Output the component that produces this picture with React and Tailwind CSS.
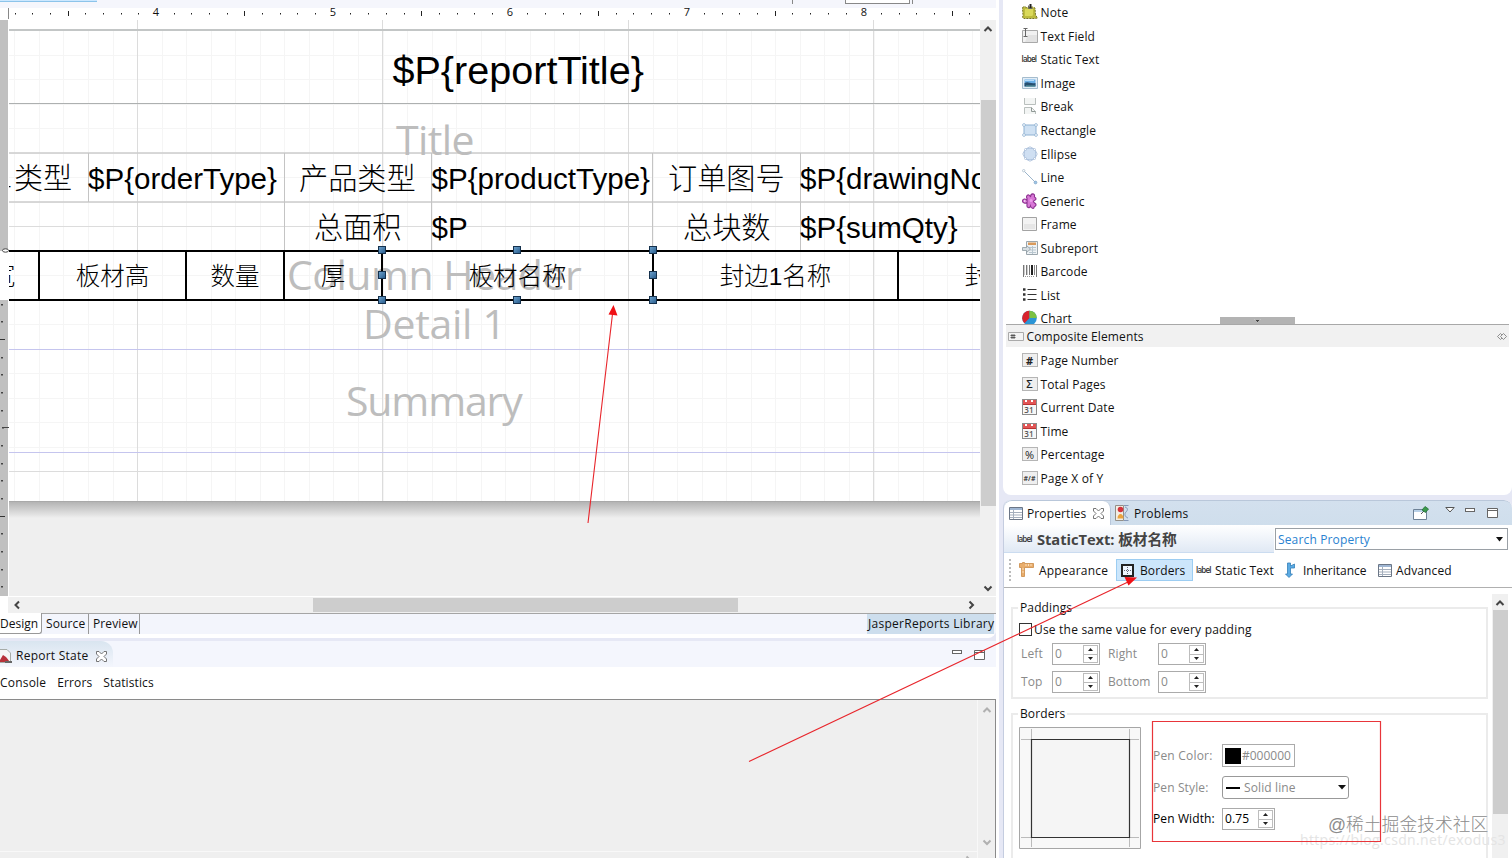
const range = (n) => Array.from({ length: n }, (_, i) => i);

const Svg = ({ w = 16, h = 16, className = "", children }) => (
  <svg width={w} height={h} viewBox={`0 0 ${w} ${h}`} className={`block shrink-0 ${className}`} fill="none">
    {children}
  </svg>
);

/* ---------- icons ---------- */

const NoteIcon = () => (
  <Svg>
    <path d="M.5 3.500l2-1 2 1 6-.5 2.500 1 .5 7 2 3-3 .5H2l-1.500-1 .5-2z" fill="#bcbb3d" stroke="#77752a" strokeDasharray="2 1" />
    <path d="M3 5h8v6l-1 1H3z" fill="#dad95a" />
    <path d="M8.500 0v5" stroke="#222" strokeWidth="2" />
    <path d="M6.500 1.500v3h4" stroke="#666" />
  </Svg>
);

const TextFieldIcon = () => (
  <Svg>
    <path d="M.5 2.500h15v12H.5z" fill="#f1f1f1" stroke="#a9a9a9" />
    <path d="M6 7h9v7H3z" fill="#e2e2e2" />
    <path d="M1.500 .5h4M3.500 .5v8M1.500 8.500h4" stroke="#666" />
  </Svg>
);

const LabelIcon = () => (
  <span className="block w-4 shrink-0 text-[8px] leading-[16px] font-semibold tracking-[-0.8px] text-[#333]">label</span>
);

const ImageIcon = () => (
  <Svg>
    <path d="M.5 2.500h15v11H.5z" fill="#e3eef7" stroke="#a5bccd" />
    <path d="M2.500 4.500h11v7h-11z" fill="#69aee6" />
    <path d="M2.500 8c4-2 5 1 11 0v3.500h-11z" fill="#274f70" />
    <path d="M4 11h9" stroke="#5fa0a0" />
    <path d="M3 5.500h9" stroke="#b8ddfa" />
  </Svg>
);

const BreakIcon = () => (
  <Svg>
    <path d="M2.500 0v6.500h11V0M2.500 16V9.500h7l4 4V16" stroke="#b9bfbd" fill="#f3f5f4" />
    <path d="M9.500 9.500v4h4" stroke="#8f9895" />
  </Svg>
);

const RectangleIcon = () => (
  <Svg>
    <path d="M2 3h12v10H2z" fill="#cfe1f3" stroke="#8eb1d2" />
    {[[2, 3], [14, 3], [2, 13], [14, 13]].map(([x, y]) => (
      <circle key={`${x}-${y}`} cx={x} cy={y} r="1.4" fill="#fff" stroke="#8eb1d2" strokeWidth=".8" />
    ))}
  </Svg>
);

const EllipseIcon = () => (
  <Svg>
    <circle cx="8" cy="8" r="6.3" fill="#cfdff2" stroke="#93add0" />
    {[[8, 1.7], [14.3, 8], [8, 14.3], [1.7, 8], [3.5, 3.5], [12.5, 3.5], [3.5, 12.5], [12.5, 12.5]].map(([x, y]) => (
      <circle key={`${x}-${y}`} cx={x} cy={y} r="1" fill="#fff" stroke="#a5bbd8" strokeWidth=".7" />
    ))}
  </Svg>
);

const LineIcon = () => (
  <Svg>
    <path d="M2 2l11 11" stroke="#9bb4ca" />
    <circle cx="1.7" cy="1.7" r="1.2" fill="#fff" stroke="#a9bccb" strokeWidth=".8" />
    <circle cx="13.5" cy="13.5" r="1.4" fill="#9cc5e8" stroke="#86a8c8" strokeWidth=".8" />
  </Svg>
);

const GenericIcon = () => (
  <Svg>
    <path
      d="M5 5.500c-1.500-3 1.500-5 3-2.500l.5 1C8.500 0 13 0 12.500 3c-.5 2 1.500 1 1.500 3 0 1.500-2.500 1-2.500 2.500s3 1.500 2.500 3.500-2 1-2 2.500-3 1-3.500-1.500c-1 3-4 1.500-3.500-1V9.500C3.500 11 .5 10 .5 8s3-3 4.500-.5z"
      fill="#d877d6"
      stroke="#8c3290"
      strokeWidth="1.1"
    />
    <circle cx="2.700" cy="8" r=".8" fill="#fff" />
    <circle cx="9" cy="7.500" r="1.500" fill="#ee9fec" />
  </Svg>
);

const FrameIcon = () => (
  <Svg>
    <path d="M.5 1.500h14v13H.5z" fill="#f3f3f3" stroke="#a3a3a3" />
    <path d="M2 8h11v5H2z" fill="#e6e6e6" />
  </Svg>
);

const SubreportIcon = () => (
  <Svg>
    <path d="M4.500 1.500h11v13h-11z" fill="#eef2f5" stroke="#9ba6ad" />
    <path d="M6 2.500h8v2.500H6z" fill="#d99a5c" />
    <path d="M7 7.500h7M7 10h7M7 12.500h7M10.500 6v8" stroke="#b8c6cf" />
    <path d="M.5 7.500h4v-2l4 3.500-4 3.500v-2h-4z" fill="#d7dee2" stroke="#8d9aa2" strokeWidth=".8" />
  </Svg>
);

const BarcodeIcon = () => (
  <Svg>
    <path d="M1.500 2v12M4.500 2v10M7.500 2v10M14.500 2v12" stroke="#777" />
    <path d="M10 2v10" stroke="#222" strokeWidth="2" />
    <path d="M12.500 2v10" stroke="#888" />
    <path d="M2.500 2v10M5.500 2v10" stroke="#ccc" />
    <path d="M3 13.500h10" stroke="#999" strokeDasharray="1 1" />
  </Svg>
);

const ListIcon = () => (
  <Svg>
    <path d="M5.500 2.500h9M5.500 7.500h9M5.500 12.500h9" stroke="#333" strokeWidth="1.2" />
    <path d="M1 2.500h2.500M1 7.500h2.500M1 12.500h2.500" stroke="#333" strokeWidth="2.500" />
  </Svg>
);

const ChartIcon = () => (
  <Svg>
    <circle cx="7.500" cy="8" r="7.3" fill="#2b95d6" />
    <path d="M7.500 8V.7a7.300 7.300 0 0 0-5 12.500z" fill="#d8232d" />
    <path d="M7.500 8V.7A7.300 7.300 0 0 1 14.800 8z" fill="#7cc143" />
  </Svg>
);

const GlyphIcon = ({ glyph, className }) => (
  <span className={`flex h-[14px] w-4 shrink-0 items-center justify-center border border-[#b5b5b5] bg-[#efefef] leading-none text-[#222] ${className}`}>
    {glyph}
  </span>
);

const CalendarIcon = () => (
  <span className="flex h-4 w-[15px] shrink-0 flex-col border border-[#8c8c8c] bg-[#f7f7f7]">
    <span className="flex h-[5px] justify-around border-b border-[#b33] bg-[#e25555]">
      <span className="size-[2px] bg-white" />
      <span className="size-[2px] bg-white" />
    </span>
    <span className="text-center text-[8px] leading-[9px] font-semibold text-[#555]">31</span>
  </span>
);

const CloseX = () => (
  <Svg w={11} h={11}>
    <path
      d="M.5.5h2.500L5.500 3 8 .5h2.500V3L8 5.500 10.500 8v2.500H8L5.500 8 3 10.500H.5V8L3 5.500.5 3z"
      fill="#fff"
      stroke="#666"
      strokeWidth=".9"
    />
  </Svg>
);

const Minimize = () => <span className="block h-[4px] w-[10px] border border-[#666] bg-white" />;

const Maximize = () => (
  <Svg w={11} h={10}>
    <path d="M.5.5h10v9H.5zM.5 2.500h10" fill="#fff" stroke="#666" />
  </Svg>
);

const Chevron = ({ dir, className = "text-[#444]" }) => {
  const d = {
    up: "M1.500 7L5 3.500 8.500 7",
    down: "M1.500 3.500L5 7l3.500-3.500",
    left: "M7 1.500L3.500 5 7 8.500",
    right: "M3.500 1.500L7 5 3.500 8.500",
  }[dir];
  return (
    <Svg w={10} h={10} className={className}>
      <path d={d} stroke="currentColor" strokeWidth="2" />
    </Svg>
  );
};

/* ---------- report canvas ---------- */

const Rulers = () => (
  <Svg w={972} h={13}>
    <path d="M.5 0v11" stroke="#888" />
    {range(55).map((i) => {
      const step = i - 8;
      const x = Math.round(148 + step * 17.68);
      if (step % 10 === 0) return null;
      return step % 5 === 0 ? (
        <rect key={i} x={x} y="3" width="1" height="5" fill="#222" />
      ) : (
        <rect key={i} x={x} y="5" width="1" height="1.500" fill="#222" />
      );
    })}
  </Svg>
);

const rulerNumbers = [
  ["4", "left-[143px]"],
  ["5", "left-[320px]"],
  ["6", "left-[497px]"],
  ["7", "left-[674px]"],
  ["8", "left-[851px]"],
];

// coordinates below are relative to the page area, which starts at (9, 20)
const Grid = () => (
  <Svg w={971} h={576}>
    <rect width="971" height="482" fill="#fff" />
    {range(40).map((i) => (
      <path key={i} d={`M${Math.round(5.3 + i * 24.55)}.5 10V482`} stroke="#f5f5f5" />
    ))}
    {range(19).map((i) => (
      <path key={i} d={`M0 ${Math.round(10 + i * 24.5)}.5H971`} stroke="#f5f5f5" />
    ))}
    <path d="M128.500 0V482M373.500 0V482M619.500 0V482M864.500 0V482" stroke="#dcdcdc" />
    <path d="M0 206.500H971M0 451.500H971" stroke="#dcdcdc" />
    <path d="M0 10H971" stroke="#c3c6c6" strokeWidth="2" />
    <path d="M0 83.500H971" stroke="#adb0b0" />
    <path d="M0 133H971M0 182H971" stroke="#cccccc" strokeWidth="1.500" />
    <path d="M79.500 133V182M275.500 133V231M422.500 133V231M643.500 133V231M791.500 133V231" stroke="#c4c4c4" />
    <path d="M0 329.500H971M0 432.500H971" stroke="#c5c5ee" />
    <path d="M0 481.500H971" stroke="#a9a9a9" />
  </Svg>
);

const cellText = [
  ["$P{reportTitle}", "left-[383.500px] top-[26px] text-[39.550px] leading-[48px]"],
  ["$P{orderType}", "left-[79px] top-[141px] text-[29.550px] leading-[36px]"],
  ["$P{productType}", "left-[422.500px] top-[141px] text-[29.550px] leading-[36px]"],
  ["$P{drawingNo}", "left-[791px] top-[141px] text-[29.550px] leading-[36px]"],
  ["$P", "left-[422.500px] top-[190px] text-[29.550px] leading-[36px]"],
  ["$P{sumQty}", "left-[791px] top-[190px] text-[29.550px] leading-[36px]"],
  ["单", "left-[-26px] top-[143px] text-[29px] leading-[36px] font-light"],
  ["类型", "left-[5px] top-[141px] text-[29px] leading-[36px] font-light"],
  ["产品类型", "left-[290px] top-[141px] text-[29.200px] leading-[36px] font-light"],
  ["订单图号", "left-[659px] top-[141px] text-[29.200px] leading-[36px] font-light"],
  ["总面积", "left-[305px] top-[190px] text-[29.200px] leading-[36px] font-light"],
  ["总块数", "left-[674px] top-[190px] text-[29.200px] leading-[36px] font-light"],
];

const bandText = [
  ["Title", "left-[387px] top-[91px] tracking-[-0.600px]"],
  ["Column Header", "left-[278px] top-[226px] tracking-[-0.500px]"],
  ["Detail 1", "left-[354px] top-[275px] tracking-[-0.300px]"],
  ["Summary", "left-[337px] top-[352px] tracking-[-1.150px]"],
];

const headerCells = [
  ["板材宽", "left-[-92px] w-[123px]"],
  ["板材高", "left-[29px] w-[149px]"],
  ["数量", "left-[176px] w-[100px]"],
  ["厚", "left-[274px] w-[100px]"],
  ["板材名称", "left-[372px] w-[273px]"],
  ["封边1名称", "left-[643px] w-[247px]"],
  ["封边2名称", "left-[888px] w-[247px]"],
];

const handles = [
  "left-[369px] top-[226px]",
  "left-[504px] top-[226px]",
  "left-[640px] top-[226px]",
  "left-[369px] top-[251px]",
  "left-[640px] top-[251px]",
  "left-[369px] top-[276px]",
  "left-[504px] top-[276px]",
  "left-[640px] top-[276px]",
];

const Page = () => (
  <div className="relative h-[576px] w-[971px] overflow-hidden bg-[#efefef] tracking-normal text-black">
    <Grid />
    <div className="absolute top-[482px] left-0 h-[16px] w-full bg-linear-to-b from-[#b4b4b4] to-[#efefef]" />
    {bandText.map(([text, pos]) => (
      <span key={text} className={`absolute font-['Open_Sans'] text-[41px] leading-[56px] whitespace-nowrap text-[#bdbdbd] ${pos}`}>
        {text}
      </span>
    ))}
    {headerCells.map(([text, pos]) => (
      <div
        key={text}
        className={`absolute top-[230px] flex h-[51px] items-center justify-center border-2 border-black pt-[3px] font-['Liberation_Sans','Noto_Sans_CJK_SC',sans-serif] text-[24.500px] font-light ${pos}`}
      >
        {text}
      </div>
    ))}
    {cellText.map(([text, pos]) => (
      <span key={text} className={`absolute font-['Liberation_Sans','Noto_Sans_CJK_SC',sans-serif] whitespace-nowrap ${pos}`}>
        {text}
      </span>
    ))}
    {handles.map((pos) => (
      <span key={pos} className={`absolute size-[8px] border border-[#15314d] bg-linear-to-br from-[#6ba0cb] to-[#2b5f8f] ${pos}`} />
    ))}
  </div>
);

const SideRuler = () => (
  <div className="relative h-[576px] w-[9px] shrink-0 bg-white">
    <Svg w={9} h={576}>
      <rect width="8" height="231" fill="#c0c0c0" />
      <rect y="280" width="8" height="296" fill="#c0c0c0" />
      {range(17).map((i) => {
        const y = Math.round(283.5 + i * 17.68);
        if (i === 7) return null;
        return i % 5 === 2 ? (
          <rect key={i} y={y} width="5" height="1" fill="#333" />
        ) : (
          <rect key={i} x="1" y={y} width="2" height="1.500" fill="#444" />
        );
      })}
      <path d="M2 407.500h7M3 407v2" stroke="#444" />
      <ellipse cx="5.500" cy="230.500" rx="3" ry="1.700" fill="#fff" stroke="#444" />
    </Svg>
  </div>
);

const DesignEditor = () => (
  <div className="flex h-[638px] flex-col overflow-hidden rounded-br-lg bg-white">
    <div className="flex h-[8px] shrink-0 items-start bg-[#f5f6fc]">
      <div className="h-[2px] w-[97px] border-b border-[#8cc4ea] bg-[#cce8ff]" />
      <div className="ml-[695px] h-[4px] w-px bg-[#888]" />
      <div className="ml-[52px] h-[4px] w-[65px] border border-t-0 border-[#888] bg-white" />
      <div className="ml-[2px] h-[4px] w-px bg-[#888]" />
    </div>
    <div className="relative h-[12px] shrink-0 pl-[8px]">
      <Rulers />
      {rulerNumbers.map(([n, pos]) => (
        <span key={n} className={`absolute -top-[2px] w-[26px] text-center font-['Open_Sans'] text-[11px] leading-[12px] text-[#111] ${pos}`}>
          {n}
        </span>
      ))}
    </div>
    <div className="flex h-[576px] shrink-0">
      <SideRuler />
      <Page />
      <div className="flex w-[16px] flex-col items-center bg-[#f0f0f0]">
        <Chevron dir="up" className="mt-[4px] text-[#444]" />
        <div className="mt-[66px] h-[406px] w-[15px] bg-[#cdcdcd]" />
        <Chevron dir="down" className="mt-[77px] text-[#444]" />
      </div>
    </div>
    <div className="flex h-[17px] shrink-0 items-center pt-px">
      <div className="w-[8px]" />
      <div className="flex h-[16px] w-[988px] items-center bg-[#f0f0f0]">
        <Chevron dir="left" className="ml-[4px] text-[#444]" />
        <div className="ml-[291px] h-[14px] w-[425px] bg-[#cdcdcd]" />
        <Chevron dir="right" className="ml-[228px] text-[#444]" />
      </div>
    </div>
    <div className="flex h-[21px] shrink-0 border-t border-[#a5a5a5] bg-[#f3f5fc]">
      <div className="-mt-px h-[21px] w-[42px] rounded-br-[3px] border-r border-b border-[#999] bg-white leading-[22px] tracking-normal">
        Design
      </div>
      <div className="w-[47px] border-r border-[#999] pl-[4px] leading-[20px]">Source</div>
      <div className="w-[51px] border-r border-[#999] pl-[4px] leading-[20px]">Preview</div>
      <div className="mr-[2px] ml-auto w-[127px] bg-[#cddeed] pl-px leading-[19px] tracking-[0.280px]">JasperReports Library</div>
    </div>
  </div>
);

const ReportState = () => (
  <div className="flex h-[217px] flex-col overflow-hidden bg-white">
    <div className="flex h-[26px] shrink-0 items-center bg-[#f4f6fd]">
      <div className="flex h-full w-[113px] items-center rounded-tr-xl bg-linear-to-b from-[#d9e5f0] to-[#f4f6fd] pt-[4px]">
        <Svg w={13} h={16}>
          <path d="M0 1.500h7l3.500 3.500v9.500H0" fill="#f5f7f5" stroke="#a6aca8" />
          <path d="M0 12l3-5 3 2 4 5H0z" fill="#b8323a" />
          <path d="M5 14h7" stroke="#666" strokeWidth="2" />
        </Svg>
        <span className="mr-[7px] ml-[3px] tracking-[0.250px]">Report State</span>
        <CloseX />
      </div>
      <div className="mr-[11px] ml-auto flex items-start gap-[12px] pt-[2px]">
        <Minimize />
        <Maximize />
      </div>
    </div>
    <div className="flex h-[32px] shrink-0 items-center gap-[11px]">
      <span className="tracking-[0.200px]">Console</span>
      <span>Errors</span>
      <span>Statistics</span>
    </div>
    <div className="flex min-h-0 grow border-t border-r border-[#8a8a8a] bg-[#efefef]">
      <div className="flex grow flex-col items-end justify-end border-r border-[#f8f8f8]">
        <div className="flex h-[7px] w-full justify-end overflow-hidden border-t border-[#f8f8f8] pr-[4px]">
          <Chevron dir="right" className="mt-[3px] text-[#b0b0b0]" />
        </div>
      </div>
      <div className="flex w-[17px] flex-col items-center justify-between pt-[5px] pb-[11px]">
        <Chevron dir="up" className="text-[#b0b0b0]" />
        <Chevron dir="down" className="text-[#b0b0b0]" />
      </div>
    </div>
  </div>
);

/* ---------- palette ---------- */

const basicElements = [
  ["Note", <NoteIcon />],
  ["Text Field", <TextFieldIcon />],
  ["Static Text", <LabelIcon />],
  ["Image", <ImageIcon />],
  ["Break", <BreakIcon />],
  ["Rectangle", <RectangleIcon />],
  ["Ellipse", <EllipseIcon />],
  ["Line", <LineIcon />],
  ["Generic", <GenericIcon />],
  ["Frame", <FrameIcon />],
  ["Subreport", <SubreportIcon />],
  ["Barcode", <BarcodeIcon />],
  ["List", <ListIcon />],
  ["Chart", <ChartIcon />],
];

const compositeElements = [
  ["Page Number", <GlyphIcon glyph="#" className="text-[11px] font-bold" />],
  ["Total Pages", <GlyphIcon glyph="Σ" className="text-[11px] font-semibold" />],
  ["Current Date", <CalendarIcon />],
  ["Time", <CalendarIcon />],
  ["Percentage", <GlyphIcon glyph="%" className="text-[11px]" />],
  ["Page X of Y", <GlyphIcon glyph="#/#" className="text-[7px] font-semibold" />],
];

const PaletteRow = ({ label, icon }) => (
  <div className="flex h-[23.550px] shrink-0 items-center pl-[18.500px]">
    <div className="flex w-[19px] shrink-0">{icon}</div>
    <span className="pt-[2px]">{label}</span>
  </div>
);

const Palette = () => (
  <div className="flex h-[495px] flex-col rounded-b-lg bg-white">
    <div className="relative flex h-[324px] shrink-0 flex-col overflow-hidden pt-[0.500px]">
      {basicElements.map(([label, icon]) => (
        <PaletteRow key={label} label={label} icon={icon} />
      ))}
      <div className="absolute bottom-0 left-[217px] flex h-[7px] w-[75px] items-center justify-center bg-[#b3b3b3]">
        <Svg w={7} h={4}>
          <path d="M.5 .5h6l-3 3z" fill="#444" stroke="#eee" strokeWidth=".5" />
        </Svg>
      </div>
    </div>
    <div className="mr-[3px] ml-[3px] flex h-[23px] shrink-0 items-center border-t border-[#a8a8a8] bg-[#f1f1f1] pr-[2px] pl-[2px]">
      <Svg w={16} h={9}>
        <path d="M.5.5h15v8H.5z" fill="#f4f4f4" stroke="#aaa" />
        <path d="M4 2v5M6 2v5M2.500 3.500h5M2.500 5.500h5" stroke="#444" strokeWidth=".8" />
      </Svg>
      <span className="ml-[2.500px] pt-[2px]">Composite Elements</span>
      <Svg w={10} h={7} className="ml-auto">
        <path d="M3.500.5L.5 3.500l3 3L5 5M3.500.5L5 2M6.500.5l3 3-3 3-3-3z" stroke="#777" strokeWidth=".8" />
      </Svg>
    </div>
    <div className="pt-[1.500px]">
      {compositeElements.map(([label, icon]) => (
        <PaletteRow key={label} label={label} icon={icon} />
      ))}
    </div>
  </div>
);

/* ---------- properties ---------- */

const TableIcon = () => (
  <Svg w={14} h={13}>
    <path d="M.5.5h13v12H.5z" fill="#fff" stroke="#6b7686" />
    <path d="M1 1h12v2H1z" fill="#9fb6d3" />
    <path d="M1 5.500h12M1 8h12M1 10.500h12M4.500 3v9" stroke="#a5afbd" />
  </Svg>
);

const SpinArrows = () => (
  <span className="my-px mr-px flex w-[15px] shrink-0 flex-col border border-[#bdbdbd]">
    <span className="flex flex-1 items-center justify-center border-b border-[#bdbdbd]">
      <Svg w={5} h={3}><path d="M0 3L2.500 0 5 3z" fill="#222" /></Svg>
    </span>
    <span className="flex flex-1 items-center justify-center">
      <Svg w={5} h={3}><path d="M0 0h5L2.500 3z" fill="#222" /></Svg>
    </span>
  </span>
);

const Spinner = ({ value, className }) => (
  <span className={`flex h-[22px] justify-between border border-[#ababab] bg-white pl-[2px] leading-[19px] ${className}`}>
    {value}
    <SpinArrows />
  </span>
);

const Group = ({ title, className, children }) => (
  <fieldset className={`mx-0 border-2 border-[#ebebeb] px-[6px] ${className}`}>
    <legend className="ml-[-1px] px-[2px] leading-[16px]">{title}</legend>
    {children}
  </fieldset>
);

const PropertyTabs = () => (
  <div className="flex h-[25px] shrink-0 rounded-t-lg border-t border-[#b9c7da] bg-linear-to-b from-[#d3e0ee] to-[#cfdeec]">
    <div className="flex w-[107px] items-center rounded-t-lg border-r border-[#b9c7da] bg-white pl-[5px]">
      <TableIcon />
      <span className="mr-[7px] ml-[4px] pt-[2px]">Properties</span>
      <CloseX />
    </div>
    <div className="flex items-center pl-[4px]">
      <Svg w={14} h={16}>
        <path d="M.5.5h8v15h-8z" fill="#f2eee4" stroke="#938f88" />
        <circle cx="5.500" cy="4.500" r="2.800" fill="#d4343c" />
        <path d="M2.500 13.500c0-6 6-6 6 0z" fill="#eba33e" />
        <path d="M9 .5h4.500M10 2c3 1 3 3 1 5s-1 5 2 6M13.500 15.500H9" stroke="#8397b7" />
      </Svg>
      <span className="ml-[5px] pt-[2px]">Problems</span>
    </div>
    <div className="mr-[14px] ml-auto flex items-start pt-[5px]">
      <Svg w={16} h={15}>
        <path d="M.5 3.500h13v10H.5z" fill="#fff" stroke="#6d8196" />
        <path d="M1 4h12v2H1z" fill="#b9d1e8" />
        <path d="M8 8l3-3" stroke="#555" />
        <path d="M9 4l3-3.500L15.500 3l-3 3.500z" fill="#3a9a4b" stroke="#23703a" strokeWidth=".8" />
      </Svg>
      <Svg w={10} h={6} className="mt-px ml-[16px]">
        <path d="M.8.5h8.400L5 5z" fill="#fff" stroke="#555" />
      </Svg>
      <span className="mt-[2px] ml-[10px]"><Minimize /></span>
      <span className="mt-[2px] ml-[12px]"><Maximize /></span>
    </div>
  </div>
);

const Toolbar = () => (
  <div className="flex h-[35px] shrink-0 items-center border-b border-[#b0b0b0] pl-[5px]">
    <span className="h-[22px] border-l-2 border-dotted border-[#bbb]" />
    <div className="ml-[8px] flex w-[97px] items-center">
      <Svg>
        <path d="M.5 1.500h3v-1h2v1h9v4h-9v9h-3v-9h-2z" fill="#e9ad6b" stroke="#c98a47" strokeWidth=".8" />
        <path d="M7 2v2M9.500 2v2M12 2v2M3 7h2M3 10h2" stroke="#fbe0bd" />
      </Svg>
      <span className="ml-[4px] pt-[2px] tracking-[0.200px]">Appearance</span>
    </div>
    <div className="flex h-[22px] w-[77px] items-center border border-[#9ccdf2] bg-[#cce6fb] pl-[4px]">
      <Svg w={13} h={13}>
        <path d="M1 1h11v11H1z" fill="#eef6ff" stroke="#222" strokeWidth="2" />
        <path d="M6.500 3v7M3 6.500h7" stroke="#667" strokeDasharray="1 1" />
      </Svg>
      <span className="ml-[6px] pt-[2px]">Borders</span>
    </div>
    <div className="ml-[3px] flex w-[88px] items-center">
      <LabelIcon />
      <span className="ml-[3px] pt-[2px] whitespace-nowrap">Static Text</span>
    </div>
    <div className="flex w-[94px] items-center">
      <Svg w={12} h={16}>
        <path d="M3.500 1h3v3l4-2v4h-4v6h2L5 15.500 1.500 12h2z" fill="#5cabe3" stroke="#347fb9" strokeWidth=".8" />
      </Svg>
      <span className="ml-[7px] pt-[2px] tracking-normal">Inheritance</span>
    </div>
    <TableIcon />
    <span className="ml-[4px] pt-[2px]">Advanced</span>
  </div>
);

const PaddingGroup = () => (
  <Group title="Paddings" className="h-[99px]">
    <label className="flex h-[21px] items-center pt-[6px]">
      <span className="size-[13px] border border-[#333] bg-white" />
      <span className="ml-[2px] pt-px tracking-[0.200px]">Use the same value for every padding</span>
    </label>
    <div className="mt-[6px] grid grid-cols-[33px_56px_50px_48px] gap-y-[6px] leading-[22px] text-[#8a8a8a]">
      <span className="pl-[2px]">Left</span>
      <Spinner value="0" className="w-[48px]" />
      <span>Right</span>
      <Spinner value="0" className="w-[48px]" />
      <span className="pl-[2px]">Top</span>
      <Spinner value="0" className="w-[48px]" />
      <span>Bottom</span>
      <Spinner value="0" className="w-[48px]" />
    </div>
  </Group>
);

const BorderGroup = () => (
  <Group title="Borders" className="mt-[7px] h-[170px]">
    <div className="flex pt-[5px]">
      <Svg w={122} h={122}>
        <path d="M.5.5h121v121H.5z" fill="#f8f8f8" stroke="#a6a6a6" />
        <path d="M12.500 2v118M110.500 2v118M2 12.500h118M2 110.500h118" stroke="#bbb" />
        <path d="M12.500 12.500h98v98h-98z" fill="#f5f5f5" stroke="#333" strokeWidth="1.200" />
      </Svg>
      <div className="ml-[12px] grid grid-cols-[69px_130px] content-start gap-y-[9px] pt-[17px] text-[#8a8a8a]">
        <span className="leading-[23px] tracking-[0.200px]">Pen Color:</span>
        <span className="flex h-[23px] w-[73px] items-center border border-[#ababab] bg-white pl-[2px]">
          <span className="size-[16px] bg-black" />
          <span className="ml-px tracking-normal">#000000</span>
        </span>
        <span className="leading-[23px]">Pen Style:</span>
        <span className="flex h-[23px] w-[127px] items-center rounded-[3px] border border-[#999] bg-white pr-[2px] pl-[3px]">
          <span className="h-[2px] w-[14px] bg-black" />
          <span className="ml-[4px]">Solid line</span>
          <Svg w={8} h={5} className="ml-auto"><path d="M0 0h8L4 4.500z" fill="#111" /></Svg>
        </span>
        <span className="leading-[21px] text-black">Pen Width:</span>
        <Spinner value="0.75" className="w-[53px] text-black" />
      </div>
    </div>
  </Group>
);

const Properties = () => (
  <div className="relative flex h-[358px] flex-col overflow-hidden rounded-t-lg border-l border-[#c5cde0] bg-white">
    <PropertyTabs />
    <div className="flex h-[28px] shrink-0 items-center bg-linear-to-b from-white to-[#dfe8f4]">
      <div className="flex h-full w-[270px] items-center border-b border-[#cbdcf0] pl-[13px]">
        <LabelIcon />
        <span className="ml-[4px] font-['Open_Sans','Noto_Sans_CJK_SC',sans-serif] text-[14.700px] font-bold tracking-[-0.050px] text-[#444]">
          StaticText: 板材名称
        </span>
      </div>
      <div className="flex h-full grow items-center bg-white">
        <div className="ml-px flex h-[22px] w-[233px] items-center justify-between border border-[#9aa0a6] pr-[4px] pl-[2px] text-[#2a82d0]">
          <span className="pt-[2px] tracking-[0.150px]">Search Property</span>
          <Svg w={7} h={5}><path d="M0 0h7L3.500 4.500z" fill="#111" /></Svg>
        </div>
      </div>
    </div>
    <Toolbar />
    <div className="flex min-h-0 grow">
      <div className="ml-[7px] w-[477px] shrink-0 pt-[12px]">
        <PaddingGroup />
        <BorderGroup />
      </div>
      <div className="mt-[6px] ml-[4px] flex w-[16px] flex-col items-center bg-[#f0f0f0]">
        <Chevron dir="up" className="mt-[4px] text-[#444]" />
        <div className="mt-[2px] h-[204px] w-[15px] bg-[#cdcdcd]" />
      </div>
    </div>
    <span className="absolute top-[330px] left-[296px] font-['Open_Sans'] text-[14px] leading-[20px] tracking-[0.350px] text-[#e4e4e4]">
      https://blog.csdn.net/exodus3
    </span>
    <span className="absolute top-[313px] left-[324px] font-['Liberation_Sans','Noto_Sans_CJK_SC',sans-serif] text-[17.800px] leading-[24px] font-light tracking-normal whitespace-nowrap text-[#8c8c8c]">
      @稀土掘金技术社区
    </span>
  </div>
);

const Annotations = () => (
  <svg width="1512" height="858" className="pointer-events-none absolute top-0 left-0" fill="none">
    <path d="M588 523L612.500 314M749 761.500L1128 582" stroke="#e8252b" strokeWidth="1.100" />
    <path d="M613.500 305l4 10.500-9-1zM1137 577.500l-8.500 8-4-8.500z" fill="#f01015" />
    <path d="M1152.500 721.500h228v120h-228z" stroke="#e8353a" strokeWidth="1.200" />
  </svg>
);

const App = () => (
  <div className="relative flex h-[858px] w-[1512px] overflow-hidden bg-[#e6e8f5] font-['Open_Sans','Noto_Sans_CJK_SC',sans-serif] text-[12px] leading-[16px] tracking-[0.120px] whitespace-nowrap text-[#111]">
    <div className="flex w-[996px] shrink-0 flex-col gap-[3px]">
      <DesignEditor />
      <ReportState />
    </div>
    <div className="w-[3px] shrink-0 bg-white" />
    <div className="ml-[4px] flex w-[509px] shrink-0 flex-col gap-[5px]">
      <Palette />
      <Properties />
    </div>
    <Annotations />
  </div>
);

export default App;
